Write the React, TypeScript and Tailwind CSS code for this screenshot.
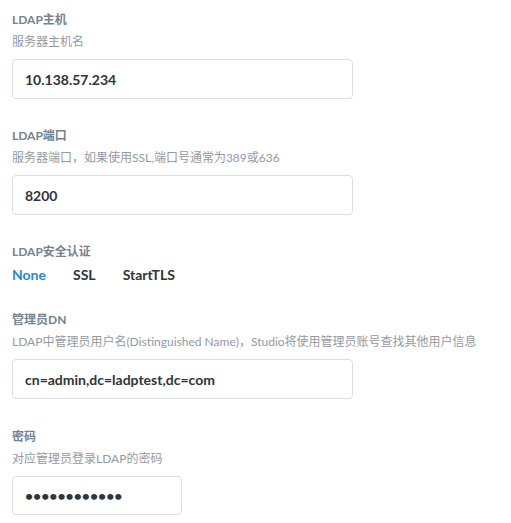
import { useState } from "react";

const FONT = { fontFamily: "Lato, 'Noto Sans CJK SC', sans-serif" };

type Opt = "None" | "SSL" | "StartTLS";

function Label({ children }: { children: React.ReactNode }) {
  return <div className="text-[12px] font-bold leading-4 text-[#74838f]">{children}</div>;
}

function Desc({ children }: { children: React.ReactNode }) {
  return <div className="mt-[6px] text-[12px] leading-4 text-[#949aa0]">{children}</div>;
}

export default function App() {
  const [host, setHost] = useState("10.138.57.234");
  const [port, setPort] = useState("8200");
  const [security, setSecurity] = useState<Opt>("None");
  const [dn, setDn] = useState("cn=admin,dc=ladptest,dc=com");
  const [pw, setPw] = useState("abcdefghijkl");

  const inputCls =
    "mt-[9px] block rounded-[4px] border border-[#dcdfe2] bg-white px-3 text-[14px] font-bold text-[#2e353b] outline-none focus:border-[#509ee3]";

  return (
    <div className="min-h-screen bg-white pl-3 pt-3" style={FONT}>
      <div>
        <Label>LDAP主机</Label>
        <Desc>服务器主机名</Desc>
        <input value={host} onChange={(e) => setHost(e.target.value)} className={inputCls + " h-[40px] w-[341px]"} />
      </div>

      <div className="mt-[29px]">
        <Label>LDAP端口</Label>
        <Desc>服务器端口，如果使用SSL,端口号通常为389或636</Desc>
        <input value={port} onChange={(e) => setPort(e.target.value)} className={inputCls + " h-[40px] w-[341px]"} />
      </div>

      <div className="mt-[29px]">
        <Label>LDAP安全认证</Label>
        <div className="mt-[7px] flex gap-[27px] text-[14px] font-bold leading-4">
          {(["None", "SSL", "StartTLS"] as Opt[]).map((o) => (
            <button key={o} onClick={() => setSecurity(o)}
              className={security === o ? "text-[#2d86d4]" : "text-[#2e353b]"}>
              {o}
            </button>
          ))}
        </div>
      </div>

      <div className="mt-[29px]">
        <Label>管理员DN</Label>
        <Desc>LDAP中管理员用户名(Distinguished Name)，Studio将使用管理员账号查找其他用户信息</Desc>
        <input value={dn} onChange={(e) => setDn(e.target.value)} className={inputCls + " h-[40px] w-[341px]"} />
      </div>

      <div className="mt-[30px]">
        <Label>密码</Label>
        <Desc>对应管理员登录LDAP的密码</Desc>
        <input type="password" value={pw} onChange={(e) => setPw(e.target.value)} className={inputCls + " h-[39px] w-[170px]"} />
      </div>
    </div>
  );
}
